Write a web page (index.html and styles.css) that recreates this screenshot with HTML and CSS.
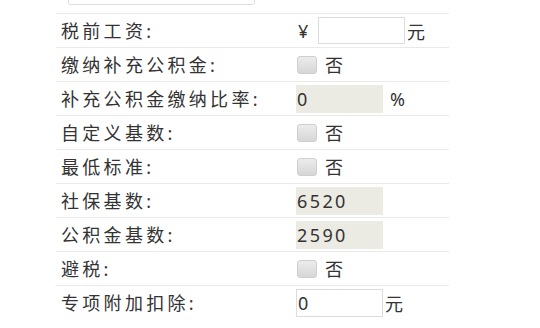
FILE: index.html
```html
<!DOCTYPE html>
<html lang="zh-CN">
<head>
<meta charset="utf-8">
<title>工资计算</title>
<link rel="stylesheet" href="styles.css">
</head>
<body>
<div class="page">
  <div class="top-box"></div>
  <div class="form">
    <div class="row">
      <div class="label">税前工资:</div>
      <div class="value"><span class="yen">¥</span><span class="input white w-salary"></span><span class="unit">元</span></div>
    </div>
    <div class="row">
      <div class="label">缴纳补充公积金:</div>
      <div class="value"><span class="check"></span><span class="no">否</span></div>
    </div>
    <div class="row">
      <div class="label">补充公积金缴纳比率:</div>
      <div class="value"><span class="input gray">0</span><span class="pct">%</span></div>
    </div>
    <div class="row">
      <div class="label">自定义基数:</div>
      <div class="value"><span class="check"></span><span class="no">否</span></div>
    </div>
    <div class="row">
      <div class="label">最低标准:</div>
      <div class="value"><span class="check"></span><span class="no">否</span></div>
    </div>
    <div class="row">
      <div class="label">社保基数:</div>
      <div class="value"><span class="input gray">6520</span></div>
    </div>
    <div class="row">
      <div class="label">公积金基数:</div>
      <div class="value"><span class="input gray">2590</span></div>
    </div>
    <div class="row">
      <div class="label">避税:</div>
      <div class="value"><span class="check"></span><span class="no">否</span></div>
    </div>
    <div class="row last">
      <div class="label">专项附加扣除:</div>
      <div class="value"><span class="input white">0</span><span class="unit2">元</span></div>
    </div>
  </div>
</div>
</body>
</html>
```

FILE: styles.css
```css
html, body {
  margin: 0;
  padding: 0;
  background: #ffffff;
}

body {
  font-family: "Noto Sans", "Noto Sans CJK SC", sans-serif;
  color: #333333;
  font-size: 18px;
}

.page {
  width: 540px;
  height: 328px;
  overflow: hidden;
}

.top-box {
  margin: -26px 0 0 68px;
  width: 185px;
  height: 29px;
  border: 1px solid #dedede;
  border-radius: 3px;
  margin-bottom: 8px;
}

.form {
  margin-left: 56px;
  width: 393px;
  display: flex;
  flex-direction: column;
}

.row {
  display: flex;
  align-items: center;
  height: 33px;
  border-top: 1px solid #e9e9e9;
}

.label {
  width: 235px;
  padding-left: 5px;
  letter-spacing: 3.3px;
  line-height: 1;
  white-space: nowrap;
}

.value {
  display: flex;
  align-items: center;
  flex: 1;
}

.yen {
  width: 20px;
  padding-left: 2px;
  font-size: 18px;
  line-height: 1;
}

.input {
  box-sizing: border-box;
  display: flex;
  align-items: center;
  width: 87px;
  height: 28px;
  padding-left: 1px;
  letter-spacing: 2.4px;
  font-size: 18px;
}

.input.gray {
  background: #ebebe4;
}

.input.white {
  background: #ffffff;
  border: 1px solid #dcdcdc;
}

.w-salary {
  height: 27px;
}

.unit {
  margin-left: 2px;
}

.unit2 {
  margin-left: 2px;
}

.pct {
  margin-left: 7px;
}

.check {
  box-sizing: border-box;
  width: 20px;
  height: 18px;
  margin-left: 1px;
  margin-right: 8px;
  border: 1px solid #cfcfcf;
  border-radius: 3px;
  background: linear-gradient(#ececec, #d6d6d6);
}

.no {
  line-height: 1;
}
```
